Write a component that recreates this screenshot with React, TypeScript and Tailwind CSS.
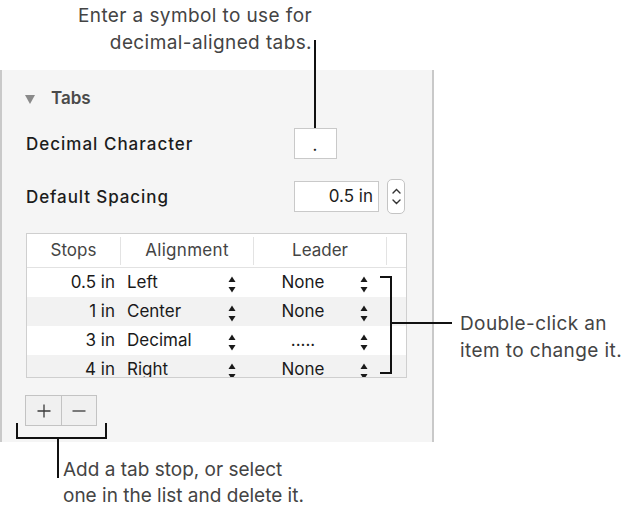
import React from 'react'

const ui = { fontFamily: 'Inter, "Liberation Sans", sans-serif' }
const note = { fontFamily: 'Inter, "Liberation Sans", sans-serif' }

const ROWS = [
  { stop: '0.5 in', align: 'Left', leader: 'None' },
  { stop: '1 in', align: 'Center', leader: 'None' },
  { stop: '3 in', align: 'Decimal', leader: '.....' },
  { stop: '4 in', align: 'Right', leader: 'None' },
]

function UpDown() {
  return (
    <svg width="8" height="17" viewBox="0 0 8 17" className="mt-[4px] shrink-0">
      <path d="M4 0.5 L7.5 6 L0.5 6 Z" fill="#1a1a1a" />
      <path d="M4 16.5 L7.5 11 L0.5 11 Z" fill="#1a1a1a" />
    </svg>
  )
}

function Stepper() {
  return (
    <div className="ml-[8px] flex h-[35px] w-[18px] flex-col items-center justify-center gap-[5px] rounded-[5px] border border-[#c4c4c4] bg-white">
      <svg width="9" height="6" viewBox="0 0 9 6">
        <path d="M1 5 L4.5 1.5 L8 5" fill="none" stroke="#333" strokeWidth="1.4" strokeLinecap="round" />
      </svg>
      <svg width="9" height="6" viewBox="0 0 9 6">
        <path d="M1 1 L4.5 4.5 L8 1" fill="none" stroke="#333" strokeWidth="1.4" strokeLinecap="round" />
      </svg>
    </div>
  )
}

function TabsTable() {
  return (
    <div className="mt-[21px] h-[145px] w-[381px] overflow-hidden border border-[#cfcfcf] bg-white text-[17px] text-[#1a1a1a]" style={ui}>
      <div className="flex h-[34px] items-center border-b border-[#e2e2e2] text-[#444]">
        <div className="flex h-[28px] w-[94px] items-center justify-center border-r border-[#e3e3e3]">Stops</div>
        <div className="flex h-[28px] w-[133px] items-center justify-center border-r border-[#e3e3e3] tracking-[0.3px]">Alignment</div>
        <div className="flex h-[28px] w-[133px] items-center justify-center border-r border-[#e3e3e3]">Leader</div>
      </div>
      {ROWS.map((r, i) => (
        <div key={r.stop} className={`flex h-[29px] shrink-0 items-center ${i % 2 ? 'bg-[#f2f2f2]' : 'bg-white'}`}>
          <div className="w-[94px] pr-[6px] text-right">{r.stop}</div>
          <div className="flex w-[133px] items-center">
            <span className="flex-1 pl-[6px]">{r.align}</span>
            <span className="mr-[18px] flex"><UpDown /></span>
          </div>
          <div className="flex w-[133px] items-center">
            <span className="w-[98px] text-center">{r.leader}</span>
            <span className="ml-[8px] flex"><UpDown /></span>
          </div>
        </div>
      ))}
    </div>
  )
}

export default function App() {
  return (
    <div className="relative h-[518px] w-[622px] overflow-hidden bg-white">
      {/* top note */}
      <div className="h-[70px] w-[312px] pt-[2px] text-right text-[19px] leading-[27px] tracking-[0.4px] text-[#444]" style={note}>
        <div className="whitespace-nowrap">Enter a symbol to use for</div>
        <div className="whitespace-nowrap">decimal-aligned tabs.</div>
      </div>

      <div className="flex">
        <div className="h-[372px] w-[434px] shrink-0 border-x-2 border-[#c9c9c9] bg-[#f5f5f5] pl-[24px] pt-[19px]" style={ui}>
          <div className="flex h-[20px] items-center">
            <div className="ml-[-1px] h-0 w-0 border-x-[5px] border-t-[9px] border-x-transparent border-t-[#8a8a8a]" />
            <span className="ml-[16px] text-[17px] font-semibold text-[#4a4a4a]">Tabs</span>
          </div>

          <div className="mt-[19px] flex h-[31px] items-center text-[17px] font-medium tracking-[1px] text-[#1c1c1c]">
            <span className="mt-[3px] w-[268px]">Decimal Character</span>
            <div className="flex h-[31px] w-[43px] items-end justify-center border border-[#c9c9c9] bg-white pb-[5px] text-[16px] leading-none">.</div>
          </div>

          <div className="mt-[22px] flex h-[31px] items-center text-[17px] font-medium tracking-[0.9px] text-[#1c1c1c]">
            <span className="mt-[2px] w-[268px]">Default Spacing</span>
            <div className="flex h-[31px] w-[85px] items-center justify-end border border-[#c9c9c9] bg-white pr-[5px] text-[17px] font-normal tracking-normal">0.5 in</div>
            <Stepper />
          </div>

          <TabsTable />

          <div className="mt-[17px] ml-[-1px] flex h-[31px] w-[72px] border border-[#c3c3c3] bg-[#f0f0f0]">
            <div className="flex w-[36px] items-center justify-center border-r border-[#c3c3c3]">
              <svg width="14" height="14" viewBox="0 0 14 14"><path d="M7 0.5 V13.5 M0.5 7 H13.5" stroke="#3a3a3a" strokeWidth="1.3" /></svg>
            </div>
            <div className="flex flex-1 items-center justify-center">
              <svg width="14" height="14" viewBox="0 0 14 14"><path d="M0.5 7 H13.5" stroke="#3a3a3a" strokeWidth="1.3" /></svg>
            </div>
          </div>
        </div>

        <div className="pl-[26px] pt-[240px] text-[19px] leading-[27px] tracking-[0.4px] text-[#444]" style={note}>
          <div className="whitespace-nowrap">Double-click an</div>
          <div className="whitespace-nowrap">item to change it.</div>
        </div>
      </div>

      <div className="pl-[63px] pt-[15px] text-[19px] leading-[26px] text-[#444]" style={note}>
        <div className="whitespace-nowrap">Add a tab stop, or select</div>
        <div className="whitespace-nowrap">one in the list and delete it.</div>
      </div>

      {/* callout lines */}
      <div className="absolute left-[314px] top-[40px] h-[88px] w-[2px] bg-[#111]" />

      <div className="absolute left-[380px] top-[276px] h-[98px] w-[12px] border-y-2 border-r-2 border-[#111]" />
      <div className="absolute left-[390px] top-[322px] h-[2px] w-[62px] bg-[#111]" />

      <div className="absolute left-[16px] top-[423px] h-[16px] w-[91px] border-x-2 border-b-2 border-[#111]" />
      <div className="absolute left-[57px] top-[437px] h-[41px] w-[2px] bg-[#111]" />
    </div>
  )
}
